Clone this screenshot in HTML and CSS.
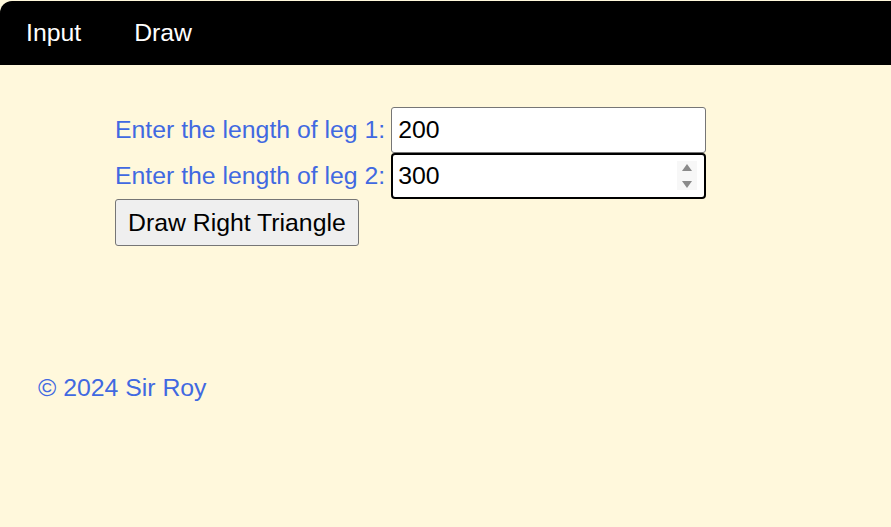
FILE: index.html
```html
<!DOCTYPE html>
<html>
<head>
<meta charset="utf-8">
<link rel="stylesheet" href="styles.css">
</head>
<body>
<div class="page">
  <nav class="topnav">
    <a class="navlink">Input</a>
    <a class="navlink">Draw</a>
  </nav>
  <main class="content">
    <form class="form">
      <div class="row">
        <label class="label">Enter the length of leg 1:</label>
        <input class="field" type="text" value="200">
      </div>
      <div class="row">
        <label class="label">Enter the length of leg 2:</label>
        <div class="field-wrap">
          <input class="field focused" type="text" value="300">
          <span class="spinner">
            <svg width="20" height="29" viewBox="0 0 20 29"><path d="M5 10 L10 3 L15 10 Z" fill="#8a8a8a"/><path d="M5 20 L15 20 L10 27 Z" fill="#8a8a8a"/></svg>
          </span>
        </div>
      </div>
      <button class="btn" type="button">Draw Right Triangle</button>
    </form>
  </main>
  <footer class="footer">© 2024 Sir Roy</footer>
</div>
</body>
</html>
```
FILE: styles.css
```css
html, body {
  margin: 0;
  padding: 0;
  background: #fff8dc;
  font-family: "Liberation Sans", Arial, sans-serif;
}
.page {
  padding-top: 1px;
  min-height: 526px;
}
.topnav {
  background: #000;
  height: 64px;
  border-top-left-radius: 12px;
  display: flex;
  align-items: center;
  padding-left: 26px;
  gap: 53px;
}
.navlink {
  color: #fff;
  font-size: 24.8px;
  text-decoration: none;
}
.content {
  padding: 42px 0 0 115px;
}
.form {
  display: flex;
  flex-direction: column;
  align-items: flex-start;
}
.row {
  display: flex;
  align-items: center;
  gap: 6px;
}
.label {
  color: #4169e1;
  font-size: 24.8px;
}
.field-wrap {
  position: relative;
}
.field {
  box-sizing: border-box;
  width: 315px;
  height: 46px;
  font-family: "Liberation Sans", Arial, sans-serif;
  font-size: 24.8px;
  color: #000;
  background: #fff;
  border: 1px solid #767676;
  border-radius: 3px;
  padding: 0 6px;
  margin: 0;
  outline: none;
}
.field.focused {
  border: 2px solid #000;
  border-radius: 4px;
  padding: 0 5px;
}
.spinner {
  position: absolute;
  right: 9px;
  top: 8px;
  width: 20px;
  height: 29px;
  background: #f7f7f7;
  display: block;
}
.spinner svg {
  display: block;
}
.btn {
  box-sizing: border-box;
  height: 47px;
  font-family: "Liberation Sans", Arial, sans-serif;
  font-size: 24.8px;
  color: #000;
  background: #efefef;
  border: 1px solid #767676;
  border-radius: 3px;
  padding: 0 12px;
  margin: 0;
}
.footer {
  color: #4169e1;
  font-size: 24.8px;
  padding: 128px 0 0 38px;
}
```
